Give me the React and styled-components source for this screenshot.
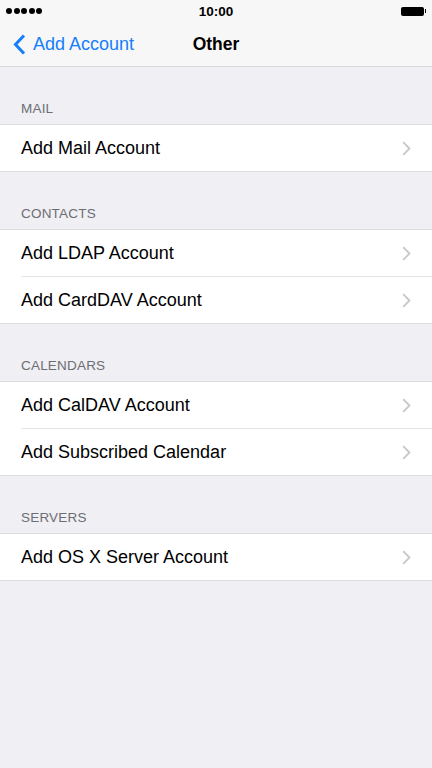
import React from "react";
import styled, { createGlobalStyle } from "styled-components";

const Global = createGlobalStyle`
  html, body {
    margin: 0;
    padding: 0;
    background: #efeff4;
    font-family: "Liberation Sans", Arial, sans-serif;
    -webkit-font-smoothing: antialiased;
  }
`;

const Screen = styled.div`
  width: 432px;
  min-height: 768px;
  background: #efeff4;
`;

const TopBar = styled.div`
  background: #f7f7f7;
  border-bottom: 1px solid #d8d8dc;
`;

const StatusBar = styled.div`
  height: 22px;
  display: flex;
  align-items: center;
  justify-content: space-between;
  padding: 0 6px;
  position: relative;
`;

const Signal = styled.div`
  display: flex;
  gap: 1.5px;
`;

const Dot = styled.span`
  width: 6px;
  height: 6px;
  border-radius: 50%;
  background: #000;
`;

const Time = styled.div`
  position: absolute;
  left: 0;
  right: 0;
  text-align: center;
  font-size: 13.5px;
  font-weight: bold;
  color: #000;
`;

const Battery = styled.div`
  display: flex;
  align-items: center;
  gap: 1px;
`;

const BatteryBody = styled.span`
  width: 23px;
  height: 9px;
  border-radius: 2px;
  background: #000;
`;

const BatteryTip = styled.span`
  width: 1.5px;
  height: 4px;
  background: #000;
`;

const NavBar = styled.div`
  height: 44px;
  display: flex;
  align-items: center;
  position: relative;
`;

const Back = styled.div`
  display: flex;
  align-items: center;
  gap: 7px;
  padding-left: 13px;
  color: #157efb;
  font-size: 18px;
  position: relative;
  z-index: 1;
`;

const Title = styled.div`
  position: absolute;
  left: 0;
  right: 0;
  text-align: center;
  font-size: 17.5px;
  font-weight: bold;
  color: #000;
`;

const Section = styled.div``;

const SectionHeader = styled.div`
  height: 57px;
  display: flex;
  align-items: flex-end;
  padding: 0 21px 8px;
  box-sizing: border-box;
  font-size: 13.5px;
  color: #6d6d72;
  letter-spacing: 0.2px;
`;

const Group = styled.div`
  background: #fff;
  border-top: 1px solid #dcdce0;
  border-bottom: 1px solid #dcdce0;
`;

const Row = styled.div`
  height: 46px;
  display: flex;
  align-items: center;
  justify-content: space-between;
  padding-right: 21px;
  margin-left: 21px;
  border-top: ${(p) => (p.first ? "none" : "1px solid #e4e4e8")};
  font-size: 18px;
  color: #000;
`;

const Chevron = () => (
  <svg width="9" height="15" viewBox="0 0 9 15">
    <path d="M1.2 1.2l6.3 6.3-6.3 6.3" fill="none" stroke="#c7c7cc" strokeWidth="1.8" />
  </svg>
);

const BackChevron = () => (
  <svg width="13" height="21" viewBox="0 0 13 21">
    <path d="M11 1.5L2.5 10.5 11 19.5" fill="none" stroke="#157efb" strokeWidth="3" />
  </svg>
);

const sections = [
  { title: "MAIL", items: ["Add Mail Account"] },
  { title: "CONTACTS", items: ["Add LDAP Account", "Add CardDAV Account"] },
  { title: "CALENDARS", items: ["Add CalDAV Account", "Add Subscribed Calendar"] },
  { title: "SERVERS", items: ["Add OS X Server Account"] },
];

export default function App() {
  return (
    <Screen>
      <Global />
      <TopBar>
        <StatusBar>
          <Signal>
            {[0, 1, 2, 3, 4].map((i) => (
              <Dot key={i} />
            ))}
          </Signal>
          <Time>10:00</Time>
          <Battery>
            <BatteryBody />
            <BatteryTip />
          </Battery>
        </StatusBar>
        <NavBar>
          <Back>
            <BackChevron />
            Add Account
          </Back>
          <Title>Other</Title>
        </NavBar>
      </TopBar>
      {sections.map((s) => (
        <Section key={s.title}>
          <SectionHeader>{s.title}</SectionHeader>
          <Group>
            {s.items.map((it, i) => (
              <Row key={it} first={i === 0}>
                {it}
                <Chevron />
              </Row>
            ))}
          </Group>
        </Section>
      ))}
    </Screen>
  );
}
